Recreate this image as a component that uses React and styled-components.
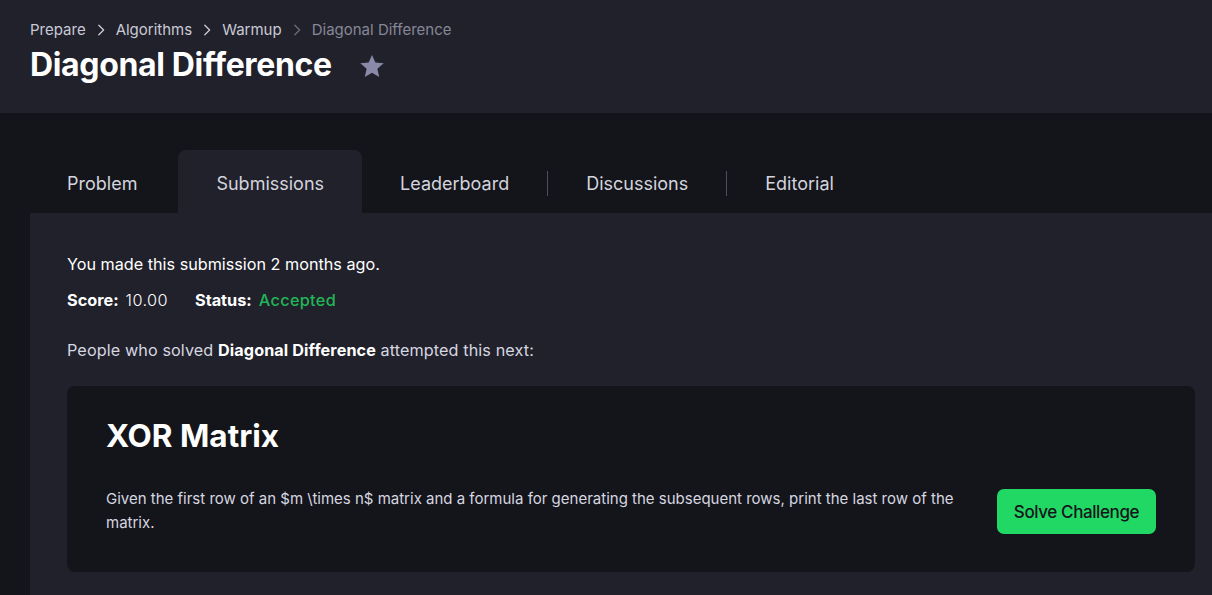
import React from "react";
import styled, { createGlobalStyle } from "styled-components";

const Global = createGlobalStyle`
  html, body { margin: 0; padding: 0; background: #14151a; }
  body { font-family: Inter, "Noto Sans", sans-serif; color: #e6e6ee; overflow: hidden; }
  * { box-sizing: border-box; }
`;

const Page = styled.div`
  width: 1212px;
  height: 595px;
  background: #14151a;
  overflow: hidden;
`;

const Header = styled.header`
  background: #21212b;
  height: 113px;
  padding: 20px 30px 0;
`;

const Crumbs = styled.nav`
  display: flex;
  align-items: center;
  gap: 7px;
  font-size: 15px;
  line-height: 20px;
  color: #c9cad6;
`;

const Crumb = styled.span`
  color: ${(p) => (p.$current ? "#878797" : "#c9cad6")};
`;

const Chevron = styled.svg`
  width: 14px;
  height: 14px;
  margin: 0 1px;
  color: ${(p) => (p.$dim ? "#6b6b7a" : "#c9cad6")};
`;

const TitleRow = styled.div`
  display: flex;
  align-items: center;
  gap: 26px;
  margin-top: 4px;
`;

const Title = styled.h1`
  margin: 0;
  font-size: 32px;
  line-height: 42px;
  font-weight: 700;
  color: #ffffff;
  letter-spacing: -0.35px;
`;

const Star = styled.svg`
  width: 28px;
  height: 28px;
  margin-top: 2px;
`;

const Body = styled.main`
  padding: 37px 0 0 30px;
`;

const Tabs = styled.div`
  display: flex;
  align-items: center;
  height: 63px;
`;

const Tab = styled.div`
  height: 63px;
  display: flex;
  align-items: center;
  padding: 3px ${(p) => (p.$first ? "41px" : "38px")} 0 ${(p) => (p.$first ? "37px" : "38px")};
  font-size: 18px;
  color: #d3d4de;
  background: ${(p) => (p.$active ? "#21212b" : "transparent")};
  border-radius: 8px 8px 0 0;
`;

const Divider = styled.div`
  width: 1px;
  height: 25px;
  background: #4d4d5c;
  margin-top: 4px;
`;

const Panel = styled.section`
  background: #21212b;
  padding: 40px 17px 40px 37px;
  height: 400px;
`;

const Line = styled.p`
  margin: 0;
  font-size: 16.2px;
  line-height: 22px;
  color: ${(p) => p.$color || "#ffffff"};
`;

const Meta = styled.div`
  display: flex;
  gap: 27px;
  margin-top: 14px;
  font-size: 16.3px;
  line-height: 22px;
  color: #ffffff;
`;

const Pair = styled.span`
  display: inline-flex;
  gap: 7px;
`;

const B = styled.b`
  font-weight: 700;
  color: #ffffff;
`;

const Value = styled.span`
  font-weight: 300;
  letter-spacing: 0.4px;
`;

const Accepted = styled.span`
  color: #22b557;
  font-weight: 500;
  letter-spacing: 0.3px;
`;

const Next = styled(Line)`
  margin-top: 28px;
  color: #d6d7e0;
  letter-spacing: 0.1px;
`;

const Card = styled.article`
  margin-top: 25px;
  background: #14151a;
  border-radius: 8px;
  padding: 30px 39px 36px 39px;
  height: 186px;
`;

const CardTitle = styled.h2`
  margin: 0;
  font-size: 31.5px;
  line-height: 40px;
  font-weight: 700;
  color: #ffffff;
`;

const CardRow = styled.div`
  display: flex;
  align-items: flex-start;
  justify-content: space-between;
  margin-top: 31px;
`;

const Desc = styled.p`
  margin: 0;
  width: 870px;
  font-size: 15px;
  line-height: 24px;
  color: #d6d7e0;
`;

const SolveButton = styled.button`
  margin-top: 2px;
  width: 159px;
  height: 45px;
  border: none;
  border-radius: 7px;
  background: #22d865;
  color: #14151a;
  font-family: inherit;
  font-size: 17px;
  font-weight: 500;
  letter-spacing: -0.4px;
`;

const ChevronIcon = ({ dim }) => (
  <Chevron $dim={dim} viewBox="0 0 16 16" fill="none" stroke="currentColor" strokeWidth="1.5" strokeLinecap="round" strokeLinejoin="round">
    <path d="M5.5 2.5 L11 8 L5.5 13.5" />
  </Chevron>
);

export default function App() {
  return (
    <Page>
      <Global />
      <Header>
        <Crumbs>
          <Crumb>Prepare</Crumb>
          <ChevronIcon />
          <Crumb>Algorithms</Crumb>
          <ChevronIcon />
          <Crumb>Warmup</Crumb>
          <ChevronIcon dim />
          <Crumb $current>Diagonal Difference</Crumb>
        </Crumbs>
        <TitleRow>
          <Title>Diagonal Difference</Title>
          <Star viewBox="0 0 24 24">
            <path
              fill="#8a8aa8"
              d="M12 2.5l2.9 6.6 7.1.6-5.4 4.7 1.6 7-6.2-3.7-6.2 3.7 1.6-7L2 9.7l7.1-.6z"
            />
          </Star>
        </TitleRow>
      </Header>
      <Body>
        <Tabs>
          <Tab $first>Problem</Tab>
          <Tab $active>Submissions</Tab>
          <Tab>Leaderboard</Tab>
          <Divider />
          <Tab>Discussions</Tab>
          <Divider />
          <Tab>Editorial</Tab>
        </Tabs>
        <Panel>
          <Line>You made this submission 2 months ago.</Line>
          <Meta>
            <Pair>
              <B>Score:</B>
              <Value>10.00</Value>
            </Pair>
            <Pair>
              <B>Status:</B>
              <Accepted>Accepted</Accepted>
            </Pair>
          </Meta>
          <Next>
            People who solved <B>Diagonal Difference</B> attempted this next:
          </Next>
          <Card>
            <CardTitle>XOR Matrix</CardTitle>
            <CardRow>
              <Desc>
                Given the first row of an $m \times n$ matrix and a formula for generating the subsequent rows, print the last row of the matrix.
              </Desc>
              <SolveButton>Solve Challenge</SolveButton>
            </CardRow>
          </Card>
        </Panel>
      </Body>
    </Page>
  );
}
